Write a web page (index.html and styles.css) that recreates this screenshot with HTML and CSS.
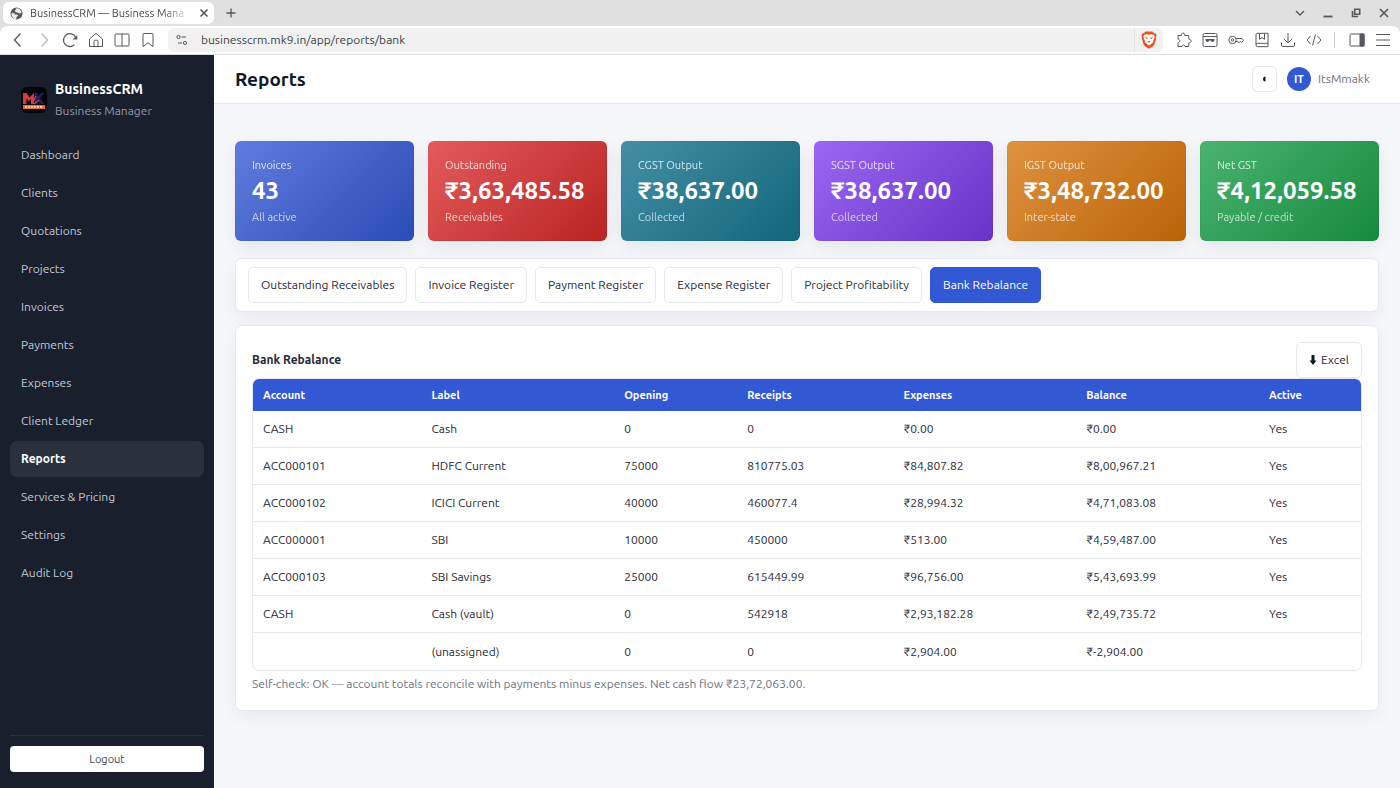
FILE: index.html
```
<!DOCTYPE html>
<html lang="en">
<head>
  <meta charset="utf-8">
  <meta name="viewport" content="width=device-width, initial-scale=1">
  <title>BusinessCRM — Business Manager</title>
  <link rel="stylesheet" href="styles.css">
</head>
<body>
  <!-- Browser window -->
  <div class="browser">
    <div class="tab-strip">
      <div class="tab">
        <svg class="favicon" viewBox="0 0 14 14"><circle cx="7" cy="7" r="6.5" fill="#55585c"/><path d="M1.5 6.500l3 .3 1.500 1.500 2-.2.600 1.400-1.600 1.300-.300 2.200-2.200-.200C2.500 11.500 1.300 9 1.500 6.500zM6 1.500l2.500-.2c2.300.800 3.800 2.700 4 5.200l-2.500.600-1.800-1.300-2.400-.300-.600-1.700 1.300-.9z" fill="#e9eaeb"/></svg>
        <span class="tab-title">BusinessCRM — Business Mana</span>
        <button class="icon-btn" aria-label="Close tab"><svg class="ic-small" viewBox="0 0 10 10"><path d="M1.500 1.500l7 7M8.500 1.500l-7 7" stroke-width="1.700"/></svg></button>
      </div>
      <button class="icon-btn new-tab" aria-label="New tab"><svg class="ic-small" viewBox="0 0 10 10"><path d="M5 .5v9M.5 5h9" stroke-width="1.300"/></svg></button>
      <div class="window-buttons">
        <button class="icon-btn" aria-label="Tab list"><svg class="ic-small" viewBox="0 0 10 10"><path d="M1 3l4 4 4-4" stroke-width="1.400"/></svg></button>
        <button class="icon-btn" aria-label="Minimise"><svg class="ic-small" viewBox="0 0 10 10"><path d="M.5 8.500h9" stroke-width="1.800"/></svg></button>
        <button class="icon-btn" aria-label="Restore"><svg class="ic-small" viewBox="0 0 10 10"><path d="M3.700 1.200h5v5h-5zM1.500 3v5.500H7" stroke-width="1.600"/></svg></button>
        <button class="icon-btn" aria-label="Close window"><svg class="ic-small" viewBox="0 0 10 10"><path d="M1 1l8 8M9 1L1 9" stroke-width="1.700"/></svg></button>
      </div>
    </div>
    <div class="toolbar">
      <div class="toolbar-group">
        <button class="icon-btn" aria-label="Back"><svg class="ic" viewBox="0 0 16 16"><path d="M10.500 1.500L4.500 8l6 6.500" stroke-width="1.400"/></svg></button>
        <button class="icon-btn disabled" aria-label="Forward" disabled><svg class="ic" viewBox="0 0 16 16"><path d="M5.500 1.500l6 6.500-6 6.500" stroke-width="1.400"/></svg></button>
        <button class="icon-btn" aria-label="Reload"><svg class="ic" viewBox="0 0 16 16"><path d="M12.300 12.800A6.400 6.400 0 1 1 13.500 5" stroke-width="1.300"/><path d="M10.500 7.500h4.800V3.200z" fill="#55585c" stroke="none"/></svg></button>
        <button class="icon-btn" aria-label="Home"><svg class="ic" viewBox="0 0 16 16"><path d="M1.500 7L8 1.500 14.500 7v7.500h-13z"/><path d="M6 14.500V9.800Q6 8 8 8t2 1.800v4.700"/></svg></button>
        <button class="icon-btn" aria-label="Split view"><svg class="ic" viewBox="0 0 16 16"><rect x="1" y="2" width="14" height="12" rx="1"/><path d="M8 2v12"/></svg></button>
        <button class="icon-btn" aria-label="Bookmark"><svg class="ic" viewBox="0 0 16 16"><path d="M3 2.500Q3 1.500 4 1.500h8q1 0 1 1v12.200l-5-4-5 4z"/></svg></button>
      </div>
      <div class="address">
        <svg class="site-icon" viewBox="0 0 12 12"><circle cx="2.500" cy="3" r="1.600"/><path d="M5.500 3H10M2 9h4"/><circle cx="9" cy="9" r="1.600"/></svg>
        <input class="url" type="text" aria-label="Address" value="businesscrm.mk9.in/app/reports/bank">
        <button class="shield" aria-label="Brave Shields">
          <svg class="brave" viewBox="0 0 16 18"><path d="M4.500.5h7l1.500 1.700 1.600 0 1 2.300-.6 1.500.2 1-1.700 6.300q-.4 1.200-1.500 1.900L8 17.700l-4-2.500q-1.100-.700-1.500-1.900L.8 7 1 6 .4 4.500l1-2.300 1.600 0z" fill="#f0501e"/><path d="M3.200 3.800L5.500 3.300 8 3.800l2.500-.5 2.300.5 1 2.200-1.500 3.200-.3 2.300L8 14.500l-4-3-.3-2.300L2.200 6z" fill="#fff"/><path d="M3.800 6l3 .8-.9 1.400zM12.200 6l-3 .8.9 1.400zM6.300 10.500L8 9.900l1.700.6L8 11.800z" fill="#f0501e"/></svg>
        </button>
      </div>
      <div class="toolbar-group">
        <button class="icon-btn" aria-label="Extensions"><svg class="ic" viewBox="0 0 16 16"><path d="M2 3.500h3.600C4.500.2 9.700.2 8.600 3.500h4.200v3.700c3 .2 3 3.600 0 3.800v3.500H9c.2-2-3.200-2-3 0H2v-4c2.300 0 2.300-3.300 0-3.300z" stroke-linejoin="round"/></svg></button>
        <button class="icon-btn" aria-label="Private window"><svg class="ic" viewBox="0 0 16 16"><rect x="1" y="1.500" width="14" height="13" rx="1.500"/><path d="M1 4.500h14"/><path d="M3.500 7h9v1.200q-.3 1.800-1.800 1.800T8.700 8.500H7.300Q6.800 10 5.300 10 3.800 10 3.500 8.200z" fill="#55585c" stroke="none"/></svg></button>
        <button class="icon-btn" aria-label="Passwords"><svg class="ic" viewBox="0 0 16 16"><circle cx="4.500" cy="8" r="3.700"/><circle cx="4.500" cy="8" r="1.200"/><path d="M8 6.500h6l1.500 1.700-1.700 2.400-1.300-1.400-1.500 1.600L9.600 9.500H8"/></svg></button>
        <button class="icon-btn" aria-label="Reading list"><svg class="ic" viewBox="0 0 16 16"><path d="M2 12.500V2.500Q2 1.300 3.200 1.300H14v13.400H3.500Q2 14.700 2 13t1.700-1.700H14M5.500 1.300v6L8 5.500l2.500 1.800v-6"/></svg></button>
        <button class="icon-btn" aria-label="Downloads"><svg class="ic" viewBox="0 0 16 16"><path d="M8 1v9.500M4 7l4 4 4-4M1.500 10.500v2.700q0 1.300 1.300 1.300h10.400q1.300 0 1.300-1.300v-2.700"/></svg></button>
        <button class="icon-btn" aria-label="Developer tools"><svg class="ic" viewBox="0 0 16 16"><path d="M4.500 4L1 8l3.500 4M11.500 4L15 8l-3.500 4M9.500 2.500l-3 11"/></svg></button>
      </div>
      <div class="toolbar-group side-group">
        <button class="icon-btn" aria-label="Sidebar"><svg class="ic" viewBox="0 0 16 16"><rect x="1" y="2" width="14" height="12" rx="1"/><path d="M11 2h4v12h-4z" fill="#55585c"/></svg></button>
        <button class="icon-btn" aria-label="Menu"><svg class="ic" viewBox="0 0 16 16"><path d="M1 2.500h14M1 8h14M1 13.500h14"/></svg></button>
      </div>
    </div>
  </div>

  <div class="app">
    <!-- Sidebar -->
    <aside class="sidebar">
      <div class="brand">
        <svg class="logo" viewBox="0 0 26 26">
          <rect width="26" height="26" rx="6" fill="#050508"/>
          <path d="M2 17V6h3.500l3 4.500L13 6v11h-3v-5l-2 2.500-2.500-3V17z" fill="#d93a3d"/>
          <path d="M13.500 6h3v4L20 6h3.500l-4.500 5 4.500 6H20l-3.500-4.500V17h-3z" fill="#1c2168"/>
          <path d="M11 17l4-8M13 17l5-4" stroke="#d93a3d" stroke-width="1.300"/>
          <rect x="2" y="18" width="22" height="4" fill="#e8683a"/>
          <path d="M4 20h18" stroke="#ffe3c0" stroke-width="1.500" stroke-dasharray="2 1"/>
        </svg>
        <div>
          <div class="brand-name">BusinessCRM</div>
          <div class="brand-sub">Business Manager</div>
        </div>
      </div>
      <nav class="nav">
        <a href="#">Dashboard</a>
        <a href="#">Clients</a>
        <a href="#">Quotations</a>
        <a href="#">Projects</a>
        <a href="#">Invoices</a>
        <a href="#">Payments</a>
        <a href="#">Expenses</a>
        <a href="#">Client Ledger</a>
        <a href="#" class="active">Reports</a>
        <a href="#">Services &amp; Pricing</a>
        <a href="#">Settings</a>
        <a href="#">Audit Log</a>
      </nav>
      <div class="sidebar-footer">
        <button class="logout">Logout</button>
      </div>
    </aside>

    <div class="main">
      <header class="topbar">
        <h1>Reports</h1>
        <div class="user">
          <button class="theme-btn" aria-label="Toggle theme"><svg class="theme-icon" viewBox="0 0 6 6"><path d="M4.500.5v5a2.500 2.500 0 0 1 0-5z" fill="#111827"/></svg></button>
          <span class="avatar">IT</span>
          <span class="user-name">ItsMmakk</span>
        </div>
      </header>

      <main class="content">
        <!-- Summary cards -->
        <section class="stats">
          <div class="stat blue"><div class="stat-label">Invoices</div><div class="stat-value">43</div><div class="stat-note">All active</div></div>
          <div class="stat red"><div class="stat-label">Outstanding</div><div class="stat-value">₹3,63,485.58</div><div class="stat-note">Receivables</div></div>
          <div class="stat teal"><div class="stat-label">CGST Output</div><div class="stat-value">₹38,637.00</div><div class="stat-note">Collected</div></div>
          <div class="stat purple"><div class="stat-label">SGST Output</div><div class="stat-value">₹38,637.00</div><div class="stat-note">Collected</div></div>
          <div class="stat orange"><div class="stat-label">IGST Output</div><div class="stat-value">₹3,48,732.00</div><div class="stat-note">Inter-state</div></div>
          <div class="stat green"><div class="stat-label">Net GST</div><div class="stat-value">₹4,12,059.58</div><div class="stat-note">Payable / credit</div></div>
        </section>

        <!-- Report switcher -->
        <nav class="card report-tabs">
          <a class="btn" href="#">Outstanding Receivables</a>
          <a class="btn" href="#">Invoice Register</a>
          <a class="btn" href="#">Payment Register</a>
          <a class="btn" href="#">Expense Register</a>
          <a class="btn" href="#">Project Profitability</a>
          <a class="btn btn-primary" href="#">Bank Rebalance</a>
        </nav>

        <section class="card report">
          <div class="report-head">
            <h2>Bank Rebalance</h2>
            <button class="btn"><svg class="down-icon" viewBox="0 0 8 10"><path d="M2.500 0h3v5.500H7.500L4 10 .5 5.500h2z" fill="#111827"/></svg>Excel</button>
          </div>
          <div class="table-wrap">
            <table>
              <colgroup>
                <col class="col-account"><col class="col-label"><col class="col-opening"><col class="col-receipts"><col class="col-money"><col class="col-money"><col>
              </colgroup>
              <thead>
                <tr><th>Account</th><th>Label</th><th>Opening</th><th>Receipts</th><th>Expenses</th><th>Balance</th><th>Active</th></tr>
              </thead>
              <tbody>
                <tr><td>CASH</td><td>Cash</td><td>0</td><td>0</td><td>₹0.00</td><td>₹0.00</td><td>Yes</td></tr>
                <tr><td>ACC000101</td><td>HDFC Current</td><td>75000</td><td>810775.03</td><td>₹84,807.82</td><td>₹8,00,967.21</td><td>Yes</td></tr>
                <tr><td>ACC000102</td><td>ICICI Current</td><td>40000</td><td>460077.4</td><td>₹28,994.32</td><td>₹4,71,083.08</td><td>Yes</td></tr>
                <tr><td>ACC000001</td><td>SBI</td><td>10000</td><td>450000</td><td>₹513.00</td><td>₹4,59,487.00</td><td>Yes</td></tr>
                <tr><td>ACC000103</td><td>SBI Savings</td><td>25000</td><td>615449.99</td><td>₹96,756.00</td><td>₹5,43,693.99</td><td>Yes</td></tr>
                <tr><td>CASH</td><td>Cash (vault)</td><td>0</td><td>542918</td><td>₹2,93,182.28</td><td>₹2,49,735.72</td><td>Yes</td></tr>
                <tr><td></td><td>(unassigned)</td><td>0</td><td>0</td><td>₹2,904.00</td><td>₹-2,904.00</td><td></td></tr>
              </tbody>
            </table>
          </div>
          <p class="self-check">Self-check: OK — account totals reconcile with payments minus expenses. Net cash flow ₹23,72,063.00.</p>
        </section>
      </main>
    </div>
  </div>
</body>
</html>
```
FILE: styles.css
```
* {
  box-sizing: border-box;
  margin: 0;
  padding: 0;
}

body {
  display: flex;
  flex-direction: column;
  min-height: 100vh;
  background: #f5f7fb;
  color: #1f2937;
  font-family: Ubuntu, "Noto Sans", sans-serif;
  font-size: 12px;
  line-height: 20px;
}

a {
  color: inherit;
  text-decoration: none;
}

button,
input {
  font: inherit;
  color: inherit;
  border: none;
  background: none;
}

button {
  cursor: pointer;
}

/* Browser window */
.browser {
  background: #e0e0e0;
  border-bottom: 1px solid #dcdcdc;
}

.tab-strip {
  display: flex;
  align-items: center;
  height: 26px;
  padding: 0 8px 0 3px;
}

.tab {
  display: flex;
  align-items: center;
  gap: 7px;
  width: 211px;
  height: 22px;
  padding: 0 5px 0 7px;
  background: #fff;
  border-radius: 6px;
}

.favicon {
  flex: none;
  width: 13px;
  height: 13px;
}

.tab-title {
  flex: 1;
  overflow: hidden;
  white-space: nowrap;
  font-size: 11px;
  color: #45484c;
  mask-image: linear-gradient(to right, #000 82%, transparent);
}

.icon-btn {
  display: flex;
  align-items: center;
  justify-content: center;
  flex: none;
}

.icon-btn svg,
.site-icon {
  fill: none;
  stroke: #55585c;
}

.new-tab {
  margin-left: 12px;
}

.window-buttons {
  display: flex;
  gap: 18px;
  margin-left: auto;
  padding-right: 3px;
}

.ic {
  width: 16px;
  height: 16px;
}

.ic-small {
  width: 10px;
  height: 10px;
}

.disabled {
  opacity: 0.4;
}

.toolbar {
  display: flex;
  align-items: center;
  height: 28px;
  padding: 0 9px 0 10px;
  background: #fff;
  border-radius: 8px 8px 0 0;
}

.toolbar-group {
  display: flex;
  align-items: center;
  gap: 10px;
}

.address {
  flex: 1;
  display: flex;
  align-items: center;
  height: 24px;
  margin: 0 13px 0 12px;
  padding-left: 8px;
  background: #f1f1f1;
  border-radius: 6px;
}

.site-icon {
  width: 12px;
  height: 12px;
}

.url {
  flex: 1;
  margin-left: 13px;
  color: #3c4043;
}

.shield {
  display: flex;
  align-items: center;
  height: 24px;
  padding: 0 6px;
  border-left: 1px solid #e2e2e2;
}

.brave {
  width: 16px;
  height: 18px;
}

.side-group {
  margin-left: 12px;
  padding-left: 14px;
  border-left: 1px solid #d0d0d0;
}

/* App */
.app {
  flex: 1;
  display: flex;
}

.sidebar {
  flex: none;
  display: flex;
  flex-direction: column;
  width: 214px;
  padding: 20px 10px 16px;
  background: #191f2d;
  color: #c3c9d4;
}

.brand {
  display: flex;
  align-items: center;
  gap: 8px;
  padding: 3px 11px 0;
}

.logo {
  width: 26px;
  height: 26px;
}

.brand-name {
  line-height: 22px;
  font-size: 14px;
  font-weight: 600;
  color: #fff;
}

.brand-sub {
  line-height: 22px;
  color: #9299a7;
}

.nav {
  display: flex;
  flex-direction: column;
  gap: 2px;
  margin-top: 15px;
}

.nav a {
  padding: 8px 11px;
  border-radius: 7px;
}

.nav .active {
  background: #2a313d;
  color: #fff;
  font-weight: 600;
}

.sidebar-footer {
  margin-top: auto;
  padding-top: 10px;
  border-top: 1px solid #2a313d;
}

.logout {
  width: 100%;
  height: 26px;
  background: #fff;
  border-radius: 4px;
  font-size: 11px;
  color: #374151;
}

.main {
  flex: 1;
  min-width: 0;
}

.topbar {
  display: flex;
  align-items: center;
  justify-content: space-between;
  height: 49px;
  padding: 0 30px 0 21px;
  background: #fff;
  border-bottom: 1px solid #e5e8ee;
}

h1 {
  font-size: 19px;
  line-height: 24px;
  font-weight: 600;
  color: #111827;
}

.user {
  display: flex;
  align-items: center;
}

.theme-btn {
  display: flex;
  align-items: center;
  justify-content: center;
  width: 25px;
  height: 26px;
  background: #fff;
  border: 1px solid #e5e8ee;
  border-radius: 5px;
}

.theme-icon {
  width: 6px;
  height: 6px;
}

.avatar {
  width: 24px;
  height: 24px;
  margin: 0 7px 0 10px;
  border-radius: 50%;
  background: #3358d4;
  color: #fff;
  text-align: center;
  line-height: 24px;
  font-size: 11px;
  font-weight: 600;
}

.user-name {
  color: #6b7280;
}

.content {
  padding: 37px 21px;
}

.stats {
  display: grid;
  grid-template-columns: repeat(6, 1fr);
  gap: 14px;
  margin-bottom: 17px;
}

.stat {
  padding: 15px 16px;
  border: 1px solid rgba(0, 0, 0, 0.03);
  border-radius: 6px;
  color: #fff;
  white-space: nowrap;
  box-shadow: 0 6px 18px rgba(17, 24, 39, 0.08);
}

.blue { background: linear-gradient(135deg, #607cdf, #2b4bb5) border-box; }
.red { background: linear-gradient(135deg, #e35b5b, #b92323) border-box; }
.teal { background: linear-gradient(135deg, #458fa5, #12657b) border-box; }
.purple { background: linear-gradient(135deg, #9b67f2, #6732c6) border-box; }
.orange { background: linear-gradient(135deg, #e09240, #b96307) border-box; }
.green { background: linear-gradient(135deg, #4ab370, #178a3e) border-box; }

.stat-label,
.stat-note {
  font-size: 11px;
  line-height: 16px;
  opacity: 0.8;
}

.stat-note {
  opacity: 0.7;
}

.stat-value {
  font-size: 24px;
  line-height: 36px;
  font-weight: 700;
}

.card {
  background: #fff;
  border: 1px solid #e5e8ee;
  border-radius: 7px;
  box-shadow: 0 6px 18px rgba(17, 24, 39, 0.06);
}

.report-tabs {
  display: flex;
  flex-wrap: wrap;
  gap: 8px;
  margin-bottom: 13px;
  padding: 8px 12px;
}

.btn {
  display: inline-flex;
  align-items: center;
  padding: 7px 12px;
  border: 1px solid #e5e8ee;
  border-radius: 5px;
  background: #fff;
  color: #1f2937;
}

.btn-primary {
  background: #3358d4;
  border-color: #3358d4;
  color: #fff;
}

.report {
  padding: 16px;
}

.report-head {
  display: flex;
  align-items: center;
  justify-content: space-between;
}

.down-icon {
  width: 8px;
  height: 10px;
  margin-right: 4px;
}

h2 {
  font-size: 12px;
  line-height: 20px;
  font-weight: 600;
}

.table-wrap {
  overflow: hidden;
  border: 1px solid #e5e8ee;
  border-radius: 7px;
}

table {
  width: 100%;
  table-layout: fixed;
  border-collapse: separate;
  border-spacing: 0;
}

.col-account { width: 15.2%; }
.col-label { width: 17.4%; }
.col-opening { width: 11.1%; }
.col-receipts { width: 14.1%; }
.col-money { width: 16.5%; }

th,
td {
  padding: 8px 10px;
  text-align: left;
}

th {
  padding: 6px 10px;
  background: #3358d4;
  color: #fff;
  font-size: 11px;
  font-weight: 600;
}

td {
  height: 37px;
  border-bottom: 1px solid #e5e8ee;
}

tbody tr:last-child td {
  border-bottom: none;
}

.self-check {
  margin-top: 3px;
  color: #6b7280;
}
```
